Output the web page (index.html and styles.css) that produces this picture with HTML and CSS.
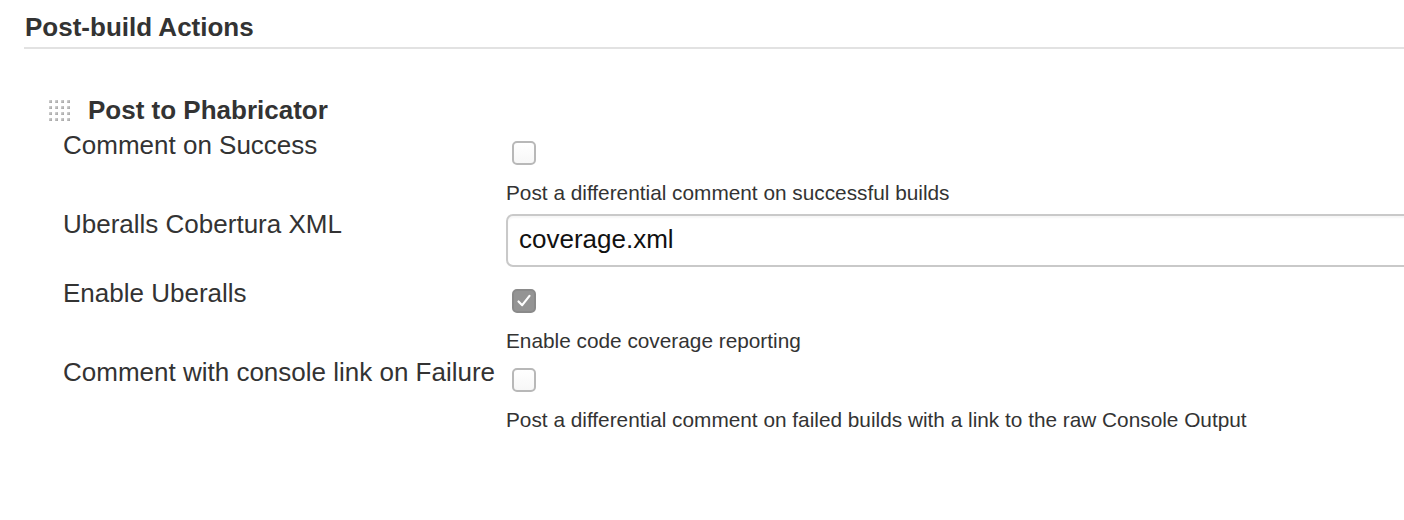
FILE: index.html
```html
<!DOCTYPE html>
<html>
<head>
<meta charset="utf-8">
<link rel="stylesheet" href="styles.css">
</head>
<body>
<div class="page">
  <h2 class="section-title">Post-build Actions</h2>
  <div class="block">
    <div class="block-head">
      <svg class="grip" width="24" height="22" viewBox="0 0 24 22">
        <defs>
          <linearGradient id="g" x1="0" y1="0" x2="1" y2="1">
            <stop offset="0" stop-color="#dcdcdc"/>
            <stop offset="1" stop-color="#9e9e9e"/>
          </linearGradient>
        </defs>
        <g fill="url(#g)">
          <rect x="0" y="0" width="3" height="3"/><rect x="6" y="0" width="3" height="3"/><rect x="12" y="0" width="3" height="3"/><rect x="18" y="0" width="3" height="3"/>
          <rect x="0" y="6" width="3" height="3"/><rect x="6" y="6" width="3" height="3"/><rect x="12" y="6" width="3" height="3"/><rect x="18" y="6" width="3" height="3"/>
          <rect x="0" y="12" width="3" height="3"/><rect x="6" y="12" width="3" height="3"/><rect x="12" y="12" width="3" height="3"/><rect x="18" y="12" width="3" height="3"/>
          <rect x="0" y="18" width="3" height="3"/><rect x="6" y="18" width="3" height="3"/><rect x="12" y="18" width="3" height="3"/><rect x="18" y="18" width="3" height="3"/>
        </g>
      </svg>
      <span class="block-title">Post to Phabricator</span>
    </div>

    <div class="setting">
      <div class="setting-name">Comment on Success</div>
      <div class="setting-main"><span class="checkbox"></span></div>
      <div class="setting-help">Post a differential comment on successful builds</div>
    </div>

    <div class="setting setting-input">
      <div class="setting-name">Uberalls Cobertura XML</div>
      <div class="setting-main"><div class="text-input">coverage.xml</div></div>
    </div>

    <div class="setting">
      <div class="setting-name">Enable Uberalls</div>
      <div class="setting-main"><span class="checkbox checked">
        <svg width="18" height="18" viewBox="0 0 18 18"><path d="M3.5 9.5 L7.2 13.2 L14.5 3.8" fill="none" stroke="#fff" stroke-width="2.2" stroke-linecap="round" stroke-linejoin="round"/></svg>
      </span></div>
      <div class="setting-help">Enable code coverage reporting</div>
    </div>

    <div class="setting">
      <div class="setting-name">Comment with console link on Failure</div>
      <div class="setting-main"><span class="checkbox"></span></div>
      <div class="setting-help">Post a differential comment on failed builds with a link to the raw Console Output</div>
    </div>
  </div>
</div>
</body>
</html>
```

FILE: styles.css
```css
html, body {
  margin: 0;
  padding: 0;
  background: #fff;
  overflow: hidden;
}
body {
  font-family: "Liberation Sans", Arial, Helvetica, sans-serif;
  color: #333;
  width: 1404px;
  height: 520px;
}
.page {
  padding-left: 24px;
}
.section-title {
  margin: 0;
  padding: 12px 0 0 1px;
  font-size: 26px;
  line-height: 30px;
  font-weight: bold;
  color: #333;
  height: 35px;
  border-bottom: 2px solid #e2e2e2;
}
.block {
  padding-top: 46px;
}
.block-head {
  display: flex;
  align-items: center;
  padding-left: 25px;
  height: 30px;
}
.grip {
  display: block;
  margin-top: 2px;
}
.block-title {
  margin-left: 15px;
  font-size: 26px;
  font-weight: bold;
  line-height: 30px;
  color: #333;
}
.setting {
  display: grid;
  grid-template-columns: 482px 1fr;
  margin-top: 4px;
}
.block-head + .setting {
  margin-top: 5px;
}
.setting-name {
  padding-left: 39px;
  font-size: 26px;
  line-height: 30px;
  color: #333;
  white-space: nowrap;
}
.setting-main {
  padding-top: 11px;
}
.setting-help {
  grid-column: 2;
  font-size: 20.8px;
  line-height: 24px;
  margin-top: 16px;
  color: #333;
  white-space: nowrap;
}
.checkbox {
  display: flex;
  align-items: center;
  justify-content: center;
  box-sizing: border-box;
  width: 24px;
  height: 24px;
  margin-left: 6px;
  border: 2px solid #b8b8b8;
  border-radius: 5px;
  background: linear-gradient(#ffffff, #f7f7f7);
}
.checkbox.checked {
  border-color: #8a8a8a;
  background: #949494;
}
.setting-input .setting-main {
  padding-top: 5px;
  padding-bottom: 7px;
}
.text-input {
  box-sizing: border-box;
  height: 53px;
  width: 940px;
  border: 2px solid #c9c9c9;
  border-radius: 7px;
  box-shadow: inset 0 2px 2px rgba(0,0,0,0.04);
  padding-left: 11px;
  font-size: 26px;
  line-height: 47px;
  color: #111;
}
```
